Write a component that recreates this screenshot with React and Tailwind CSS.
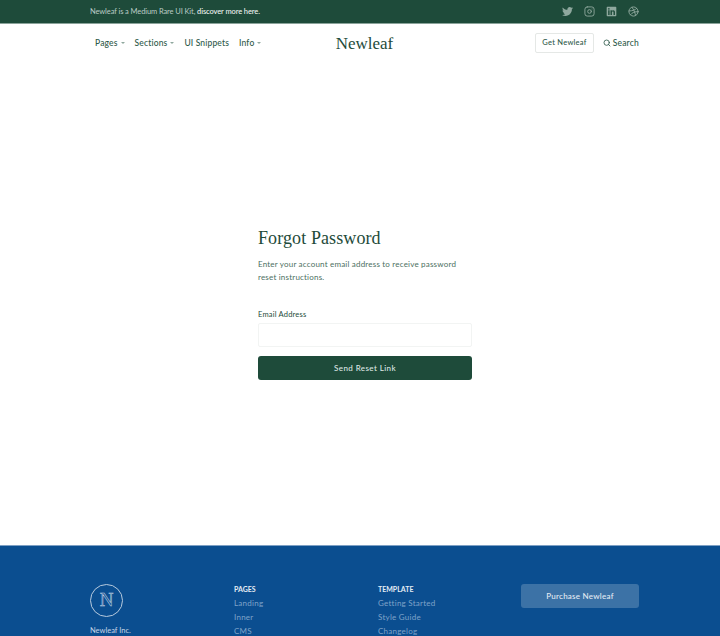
import React from 'react';
import { Search, Instagram, Dribbble } from 'lucide-react';
import { FaTwitter, FaLinkedin } from 'react-icons/fa';

function Caret() {
  return <span className="ml-[3px] inline-block h-0 w-0 border-x-2 border-t-2 border-x-transparent border-t-[#8fa89e] align-middle"></span>;
}

function NavItem({ label, caret }) {
  return (
    <a className="text-[8.5px] font-medium tracking-[0.15px] text-[#2f5a4a]">
      {label}
      {caret && <Caret />}
    </a>
  );
}

function FooterColumn({ title, links, width }) {
  return (
    <div className={width}>
      <h6 className="mb-[2px] text-[7px] font-bold leading-[10px] text-[#e4ecf4]">{title}</h6>
      {links.map((link) => (
        <div key={link} className="text-[8px] leading-[14px] tracking-[0.25px] text-[#7fa3c9]">
          {link}
        </div>
      ))}
    </div>
  );
}

export default function App() {
  return (
    <div className="flex h-[636px] flex-col overflow-hidden bg-white font-['Lato','Noto_Sans',sans-serif]">
      <div className="h-[24px] shrink-0 border-b border-[#8aa39a] bg-[#1e4b3a]">
        <div className="flex h-[23px] items-center justify-between pl-[90px] pr-[81px]">
          <span className="text-[7.5px] tracking-[-0.1px] text-[#bccbc6]">
            Newleaf is a Medium Rare UI Kit, <span className="font-medium text-[#eef2f0]">discover more here.</span>
          </span>
          <div className="flex items-center gap-[11px] text-[#8fa89e]">
            <FaTwitter size={11} />
            <Instagram size={11} />
            <FaLinkedin size={11} />
            <Dribbble size={11} />
          </div>
        </div>
      </div>

      <nav className="flex h-[38px] shrink-0 items-center justify-between pl-[95px] pr-[81px]">
        <div className="flex w-[170px] items-center gap-[10px]">
          <NavItem label="Pages" caret />
          <NavItem label="Sections" caret />
          <NavItem label="UI Snippets" />
          <NavItem label="Info" caret />
        </div>
        <span className="font-['Liberation_Serif',serif] text-[17px] leading-none text-[#1e4b3a]">Newleaf</span>
        <div className="flex w-[175px] items-center justify-end gap-[9px]">
          <button className="h-[20px] rounded-[2px] border border-[#e5e8e6] px-[6px] text-[7.5px] font-medium tracking-[0.25px] text-[#2f5a4a]">
            Get Newleaf
          </button>
          <span className="flex items-center gap-[2px] text-[8.5px] font-medium tracking-[0.2px] text-[#2f5a4a]">
            <Search size={8} strokeWidth={2.5} />
            Search
          </span>
        </div>
      </nav>

      <main className="flex flex-1 items-center justify-center pb-[1px] pl-[10px]">
        <div className="w-[214px]">
          <h1 className="font-['Liberation_Serif',serif] text-[18px] leading-[22px] tracking-[0.1px] text-[#1e4b3a]">
            Forgot Password
          </h1>
          <p className="mt-[9px] text-[8px] leading-[13px] tracking-[0.2px] text-[#4b6f61]">
            Enter your account email address to receive password reset instructions.
          </p>
          <label className="mt-[26px] block text-[7.5px] leading-[10px] tracking-[0.2px] text-[#1e4b3a]">Email Address</label>
          <input className="mt-[3px] block h-[24px] w-full rounded-[2px] border border-[#f2f4f3] bg-white" />
          <button className="mt-[9px] h-[24px] w-full rounded-[3px] bg-[#1e4b3a] pt-[1px] text-[8px] font-medium tracking-[0.4px] text-[#dfe7e4]">
            Send Reset Link
          </button>
        </div>
      </main>

      <footer className="h-[91px] shrink-0 border-t border-[#7ea0c4] bg-[#0b4e90] pl-[90px] pt-[38px]">
        <div className="flex">
          <div className="w-[144px]">
            <div className="flex h-[33px] w-[33px] items-center justify-center rounded-full border border-[#b7cade] font-['Liberation_Serif',serif] text-[19px] text-transparent [-webkit-text-stroke:0.5px_#c6d5e5]">
              N
            </div>
            <div className="mt-[9px] text-[7.5px] leading-[10px] text-[#c6d5e5]">Newleaf Inc.</div>
          </div>
          <FooterColumn title="PAGES" links={['Landing', 'Inner', 'CMS']} width="w-[144px]" />
          <FooterColumn title="TEMPLATE" links={['Getting Started', 'Style Guide', 'Changelog']} width="w-[143px]" />
          <button className="h-[24px] w-[118px] rounded-[3px] bg-[#3c72a6] text-[8px] font-medium tracking-[0.25px] text-[#e3ebf3]">
            Purchase Newleaf
          </button>
        </div>
      </footer>
    </div>
  );
}
